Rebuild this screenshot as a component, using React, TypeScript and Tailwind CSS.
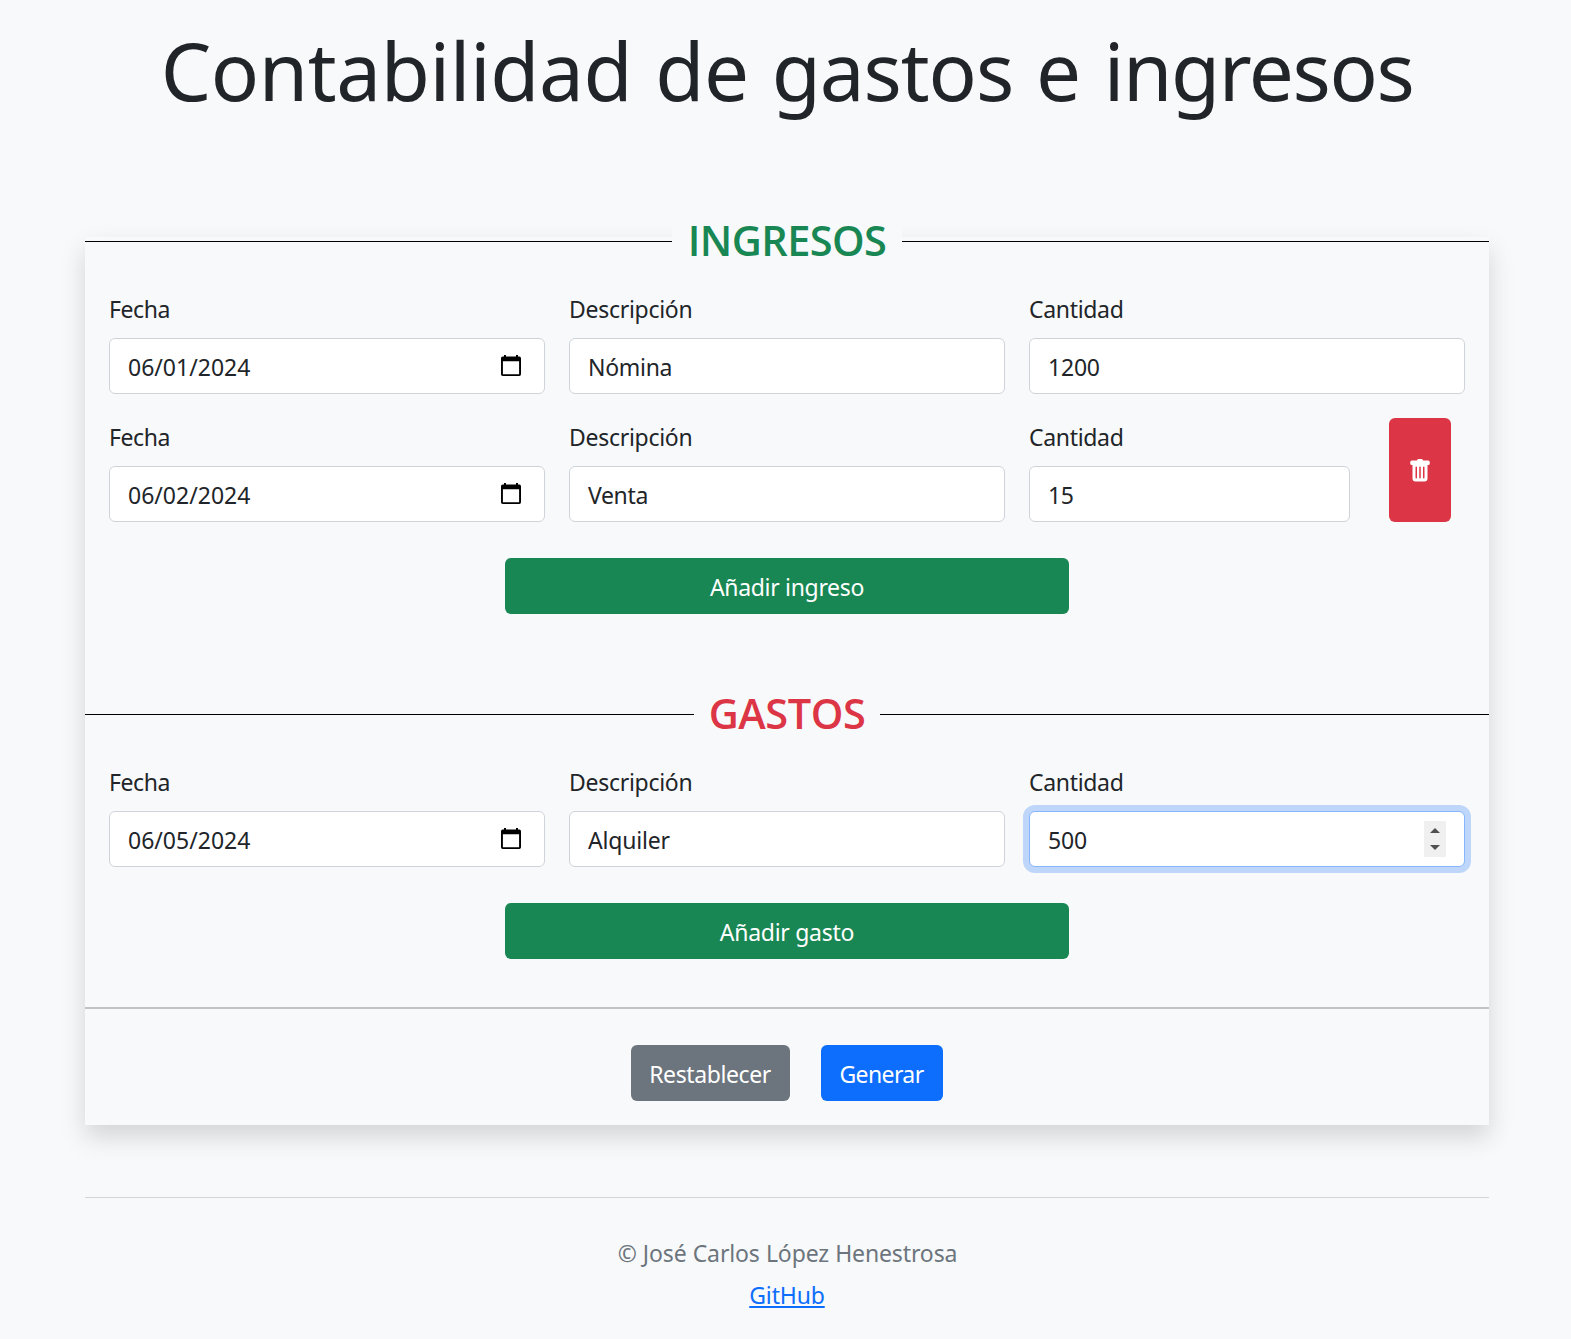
import type { ReactNode } from "react";

function CalendarIcon() {
  return (
    <svg width="20" height="21" viewBox="0 0 20 21" className="-mt-px shrink-0 text-black" aria-hidden="true">
      <path
        fill="currentColor"
        fillRule="evenodd"
        d="M3 0h2v1.500h10V0h2v1.500h1.300A1.700 1.700 0 0 1 20 3.200v16.100a1.700 1.700 0 0 1-1.700 1.700H1.700A1.700 1.700 0 0 1 0 19.300V3.200A1.700 1.700 0 0 1 1.700 1.500H3zM1.900 6.200v13h16.200V6.200z"
      />
    </svg>
  );
}

function TrashIcon() {
  return (
    <svg width="24" height="24" viewBox="0 0 16 16" fill="currentColor" aria-hidden="true">
      <path d="M2.500 1a1 1 0 0 0-1 1v1a1 1 0 0 0 1 1H3v9a2 2 0 0 0 2 2h6a2 2 0 0 0 2-2V4h.5a1 1 0 0 0 1-1V2a1 1 0 0 0-1-1H10a1 1 0 0 0-1-1H7a1 1 0 0 0-1 1H2.500zm3 4a.5.5 0 0 1 .5.5v7a.5.5 0 0 1-1 0v-7a.5.5 0 0 1 .5-.5zM8 5a.5.5 0 0 1 .5.5v7a.5.5 0 0 1-1 0v-7A.5.5 0 0 1 8 5zm3 .5v7a.5.5 0 0 1-1 0v-7a.5.5 0 0 1 1 0z" />
    </svg>
  );
}

function Spinner() {
  return (
    <div className="flex h-9 w-[22px] shrink-0 flex-col items-center justify-between bg-[#f0f0f0] py-[7px] text-[#505050]">
      <svg width="10" height="5" viewBox="0 0 10 5" fill="currentColor" aria-hidden="true">
        <path d="M5 0l5 5H0z" />
      </svg>
      <svg width="10" height="5" viewBox="0 0 10 5" fill="currentColor" aria-hidden="true">
        <path d="M0 0h10L5 5z" />
      </svg>
    </div>
  );
}

type FieldProps = {
  label: string;
  labelTracking: string;
  value: string;
  tracking?: string;
  focused?: boolean;
  className?: string;
  children?: ReactNode;
};

function Field({ label, labelTracking, value, tracking = "", focused = false, className = "w-[436px]", children }: FieldProps) {
  return (
    <label className={`flex flex-col ${className}`}>
      <span className={`mb-2.5 leading-[38px] ${labelTracking}`}>{label}</span>
      <span
        className={`flex h-14 items-center rounded-[6px] border bg-white px-[18px] ${
          focused ? "border-[#86b7fe] shadow-[0_0_0_6px_rgba(13,110,253,0.25)]" : "border-[#ced4da]"
        }`}
      >
        <input
          type="text"
          defaultValue={value}
          className={`h-full w-full min-w-0 bg-transparent pt-0.5 outline-none ${tracking}`}
        />
        {children}
      </span>
    </label>
  );
}

function DateField({ value }: { value: string }) {
  return (
    <Field label="Fecha" labelTracking="tracking-[-0.4px]" value={value}>
      <span className="mr-[5px] flex">
        <CalendarIcon />
      </span>
    </Field>
  );
}

function DescriptionField({ value, tracking }: { value: string; tracking: string }) {
  return <Field label="Descripción" labelTracking="tracking-[-0.28px]" value={value} tracking={tracking} />;
}

function SectionTitle({ className, children }: { className: string; children: ReactNode }) {
  return (
    <div className="flex h-[55px] items-center">
      <span className="h-px flex-1 bg-black" />
      <h2
        className={`h-[55px] bg-[#f8f9fa] pb-[3px] text-center font-['Open_Sans',sans-serif] text-[41.5px] leading-[52px] font-semibold ${className}`}
      >
        {children}
      </h2>
      <span className="h-px flex-1 bg-black" />
    </div>
  );
}

function AddButton({ tracking, children }: { tracking: string; children: ReactNode }) {
  return (
    <button type="button" className={`mx-auto mt-9 h-14 w-[564px] rounded-[6px] bg-[#198754] pt-0.5 text-white ${tracking}`}>
      {children}
    </button>
  );
}

export default function App() {
  return (
    <div className="flex h-[1339px] w-full flex-col items-center overflow-hidden bg-[#f8f9fa] pt-5 pl-[3px] font-['Noto_Sans',sans-serif] text-[23px] text-[#212529]">
      <h1 className="text-[80px] leading-[100px] tracking-[-0.4px] [word-spacing:2.500px] whitespace-nowrap">
        Contabilidad de <span className="tracking-[-1.100px]">gastos</span> e{" "}
        <span className="tracking-[-1.400px]">ingresos</span>
      </h1>

      <form className="mt-[117px] flex h-[888px] w-[1404px] flex-col bg-[#f8f9fa] shadow-[0_12px_24px_rgba(0,0,0,0.15)]">
        <section className="-mt-[23px] flex flex-col">
          <SectionTitle className="w-[230px] tracking-[-0.6px] text-[#198754]">INGRESOS</SectionTitle>
          <div className="mt-[21px] flex flex-col gap-6 px-6">
            <div className="flex gap-6">
              <DateField value="06/01/2024" />
              <DescriptionField value="Nómina" tracking="tracking-[-0.3px]" />
              <Field label="Cantidad" labelTracking="tracking-[-0.32px]" value="1200" tracking="tracking-[-0.2px]" />
            </div>
            <div className="flex gap-6">
              <DateField value="06/02/2024" />
              <DescriptionField value="Venta" tracking="tracking-[-0.35px]" />
              <Field label="Cantidad" labelTracking="tracking-[-0.32px]" value="15" tracking="tracking-[-0.3px]" className="w-[321px]" />
              <button
                type="button"
                aria-label="Eliminar"
                className="ml-[15px] flex h-[104px] w-[62px] items-center justify-center rounded-[6px] bg-[#dc3545] pt-0.5 text-white"
              >
                <TrashIcon />
              </button>
            </div>
          </div>
          <AddButton tracking="tracking-[-0.32px]">Añadir ingreso</AddButton>
        </section>

        <section className="mt-[73px] flex flex-col">
          <SectionTitle className="w-[186px] tracking-[-0.45px] text-[#dc3545]">GASTOS</SectionTitle>
          <div className="mt-[21px] flex gap-6 px-6">
            <DateField value="06/05/2024" />
            <DescriptionField value="Alquiler" tracking="tracking-[-0.2px]" />
            <Field label="Cantidad" labelTracking="tracking-[-0.32px]" value="500" tracking="tracking-[-0.2px]" focused>
              <Spinner />
            </Field>
          </div>
          <AddButton tracking="tracking-[-0.28px]">Añadir gasto</AddButton>
        </section>

        <hr className="mt-12 h-0.5 border-0 bg-[#c0c2c4]" />
        <div className="mt-9 flex justify-center gap-[31px] pr-px">
          <button type="reset" className="h-14 w-[159px] rounded-[6px] bg-[#6c757d] pt-0.5 tracking-[-0.4px] text-white">
            Restablecer
          </button>
          <button type="submit" className="h-14 w-[122px] rounded-[6px] bg-[#0d6efd] pt-0.5 tracking-[-0.6px] text-white">
            Generar
          </button>
        </div>
      </form>

      <footer className="mt-[72px] flex w-[1404px] flex-col items-center border-t border-[#d3d6d9] pt-[34px] leading-[42px] text-[#6c757d]">
        <p className="pl-px tracking-[-0.12px] [word-spacing:0.3px]">© José Carlos López Henestrosa</p>
        <a href="#" className="tracking-[-0.15px] text-[#0d6efd] underline decoration-2 underline-offset-2">
          GitHub
        </a>
      </footer>
    </div>
  );
}
